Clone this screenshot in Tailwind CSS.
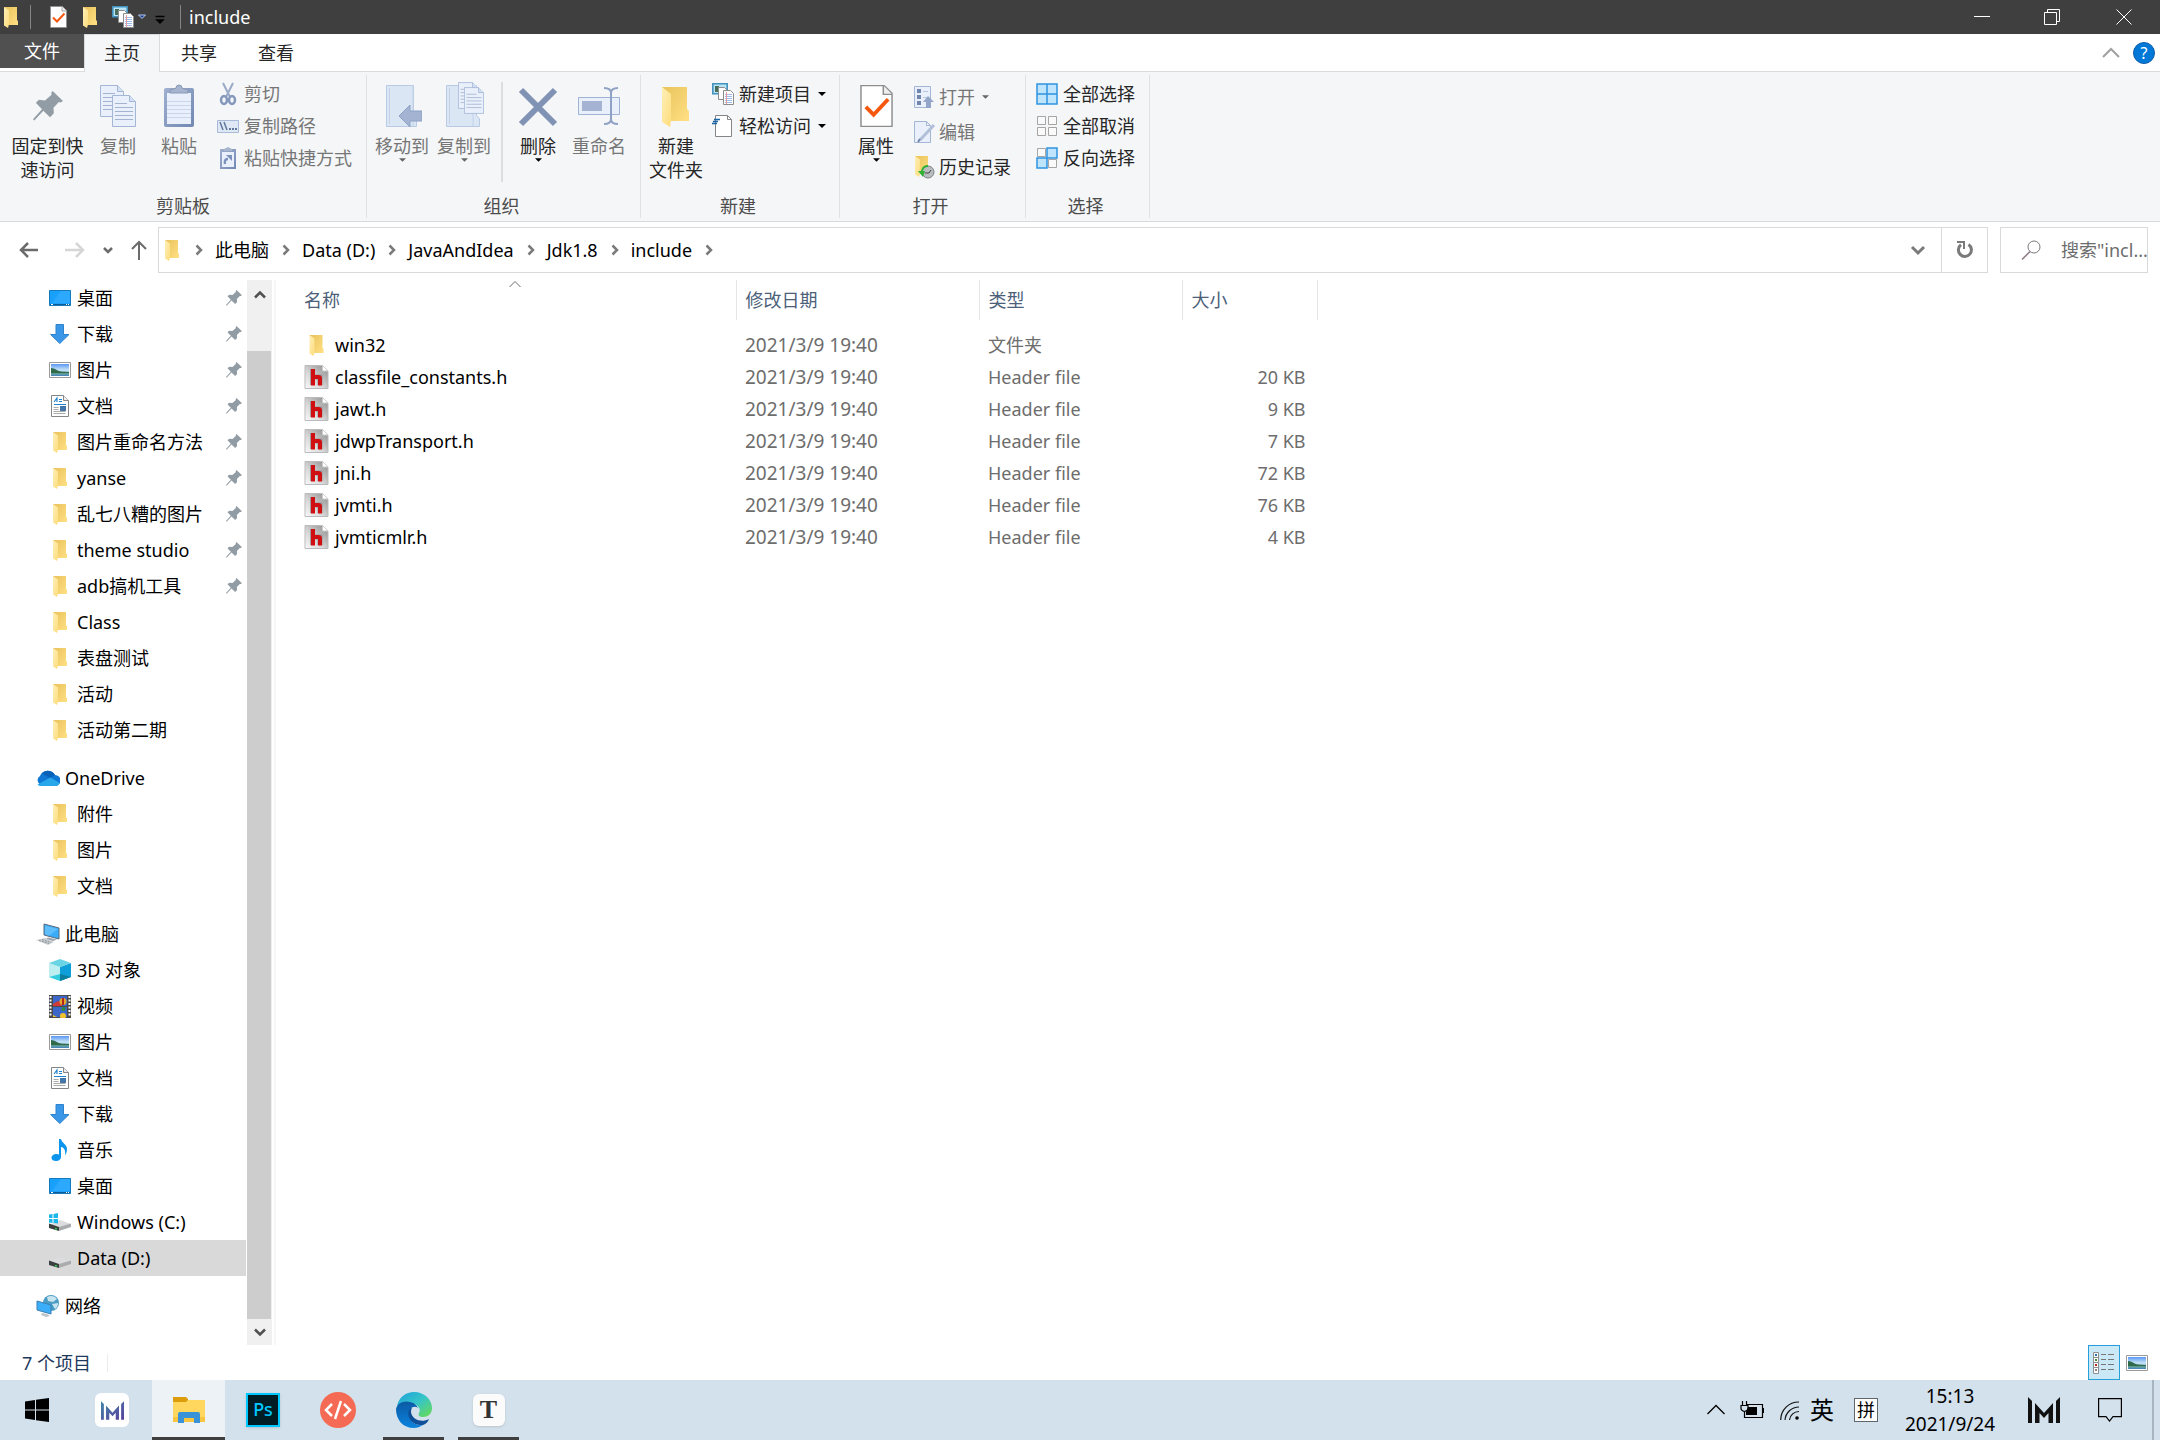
<!DOCTYPE html>
<html lang="zh-CN">
<head>
  <meta charset="UTF-8">
  <meta name="viewport" content="width=device-width, initial-scale=1.0">
  <title>include</title>
  <script src="https://cdn.jsdelivr.net/npm/@tailwindcss/browser@4"></script>
</head>
<body class="flex min-h-screen flex-col bg-white font-['Noto_Sans','Noto_Sans_CJK_SC',sans-serif] text-[18px] leading-6 text-black">

  <!-- Shared icons -->
  <svg class="absolute size-0" aria-hidden="true">
    <defs>
      <linearGradient id="gold" x1="0" y1="0" x2="1" y2="1"><stop offset="0" stop-color="#e9c25b"/><stop offset="1" stop-color="#ffe084"/></linearGradient>
      <linearGradient id="cream" x1="0" y1="0" x2="1" y2="1"><stop offset="0" stop-color="#fff0b8"/><stop offset="1" stop-color="#fddc7c"/></linearGradient>
      <linearGradient id="sky" x1="0" y1="0" x2="0" y2="1"><stop offset="0" stop-color="#5a97f5"/><stop offset=".5" stop-color="#c8e4f5"/><stop offset="1" stop-color="#3f7fb5"/></linearGradient>
      <linearGradient id="grey" x1="1" y1="0" x2="0" y2="1"><stop offset="0" stop-color="#8a8a8a"/><stop offset=".6" stop-color="#d8d8d8"/><stop offset="1" stop-color="#fafafa"/></linearGradient>
      <linearGradient id="clip" x1="0" y1="0" x2="1" y2="1"><stop offset="0" stop-color="#9fb0cf"/><stop offset="1" stop-color="#7288b3"/></linearGradient>
      <linearGradient id="mark" x1="0" y1="0" x2="1" y2="1"><stop offset="0" stop-color="#3d86a8"/><stop offset="1" stop-color="#5a3f9c"/></linearGradient>
      <linearGradient id="edgeTop" x1="0" y1="0" x2="1" y2="1"><stop offset="0" stop-color="#1e9fdc"/><stop offset=".5" stop-color="#36c5c8"/><stop offset="1" stop-color="#6bdc4c"/></linearGradient>
      <linearGradient id="edgeBlue" x1="0" y1="0" x2="0" y2="1"><stop offset="0" stop-color="#0c59a4"/><stop offset="1" stop-color="#0a84df"/></linearGradient>
    </defs>
    <symbol id="folder" viewBox="0 0 14 21"><path d="M0 0h13v13l1 1v4H4z" fill="url(#gold)"/><path d="M0 0l5 3.500v14l-1 3.500-4-2.500z" fill="url(#cream)"/></symbol>
    <symbol id="pin" viewBox="0 0 16 16"><path d="M10.500 0L16 5.300l-1.300.8-.9-.2-2.900 3 .2 3-2 2.100-3.600-3.500L.7 15.700 0 15l4.800-5.300-3.300-3.400 1.700-1.600 3.200.3L9.900 2l-.2-1z" fill="#929ca4"/></symbol>
    <symbol id="desktop" viewBox="0 0 22 16"><path d="M.5.5h21v15H.5z" fill="#18a0fb" stroke="#1579bd"/><path d="M12 1h9v12H3z" fill="#3aaefd" opacity=".6"/><path d="M1 14.500h20" stroke="#0d5b94"/><path d="M2 14.500h2M17 14.500h1M19 14.500h1" stroke="#fff"/></symbol>
    <symbol id="down" viewBox="0 0 20 20"><path d="M6 .5h7.500v10h5.500l-9.200 9-9.200-9H6z" fill="#3a97e8" stroke="#2d83ce"/></symbol>
    <symbol id="picture" viewBox="0 0 22 16"><path d="M.5.5h21v15H.5z" fill="#fff" stroke="#9a9a9a"/><path d="M2 2h18v12H2z" fill="url(#sky)"/><path d="M2 6c4 0 6 3 10 3.500 3 .3 5 .5 8 .5v1H2z" fill="#2f6a4b"/><path d="M2 11h18v1.500H2z" fill="#5c9a8e"/></symbol>
    <symbol id="doc" viewBox="0 0 18 22"><path d="M.5.5h12l5 5v16H.5z" fill="#fff" stroke="#858585"/><path d="M12.500.5v5h5" fill="#eee" stroke="#858585"/><path d="M3 7l3-4v4M8 4.500h3M8 6.500h3M3 9.500h12" stroke="#2084d0" fill="none" stroke-width="1.200"/><path d="M9 11h6v5H9z" fill="#4476aa"/><path d="M2.500 12.500h5M2.500 14.500h5M2.500 16.500h12M2.500 18.500h12" stroke="#aaa"/></symbol>
    <symbol id="cloud" viewBox="0 0 24 16"><path d="M5 15a5 5 0 0 1-1-9 8.300 8.300 0 0 1 15-1 5.400 5.400 0 0 1 0 11H5z" fill="#0f78d4"/><path d="M6 3.500A8 8 0 0 1 19 5l-5 3z" fill="#0a62b8"/><path d="M14.500 7.500l9.300 5.500a5 5 0 0 1-4.800 3H4a5 5 0 0 1-2.500-1.500z" fill="#28a8ea"/></symbol>
    <symbol id="pc" viewBox="0 0 24 22"><path d="M8 1l15 4v11L8 12z" fill="#3badf8" stroke="#57697a"/><path d="M9 2.500L22 6l-9 6.500-4-1z" fill="#74c9fd" opacity=".6"/><path d="M12 14.500l9 2-4 1.500-7-2z" fill="#9aa6ae"/><path d="M0 17l9-2 9 4-6 3z" fill="#c9ced2"/><path d="M3 17.500l10 3M6 16.500l9 3" stroke="#8e969c" stroke-dasharray="2 1"/></symbol>
    <symbol id="cube" viewBox="0 0 22 22"><path d="M0 4l11 4v14L0 18z" fill="#bdeef0"/><path d="M22 4L11 8v14l11-4z" fill="#0e9fd8"/><path d="M11 0l11 4-11 4L0 4z" fill="#69d4e4"/><path d="M11 15l11 3-11 4z" fill="#0c7f9e"/><path d="M11 15v7L0 18z" fill="#34cde0"/></symbol>
    <symbol id="film" viewBox="0 0 22 23"><path d="M0 0h22v23H0z" fill="#4a4a4a"/><path d="M1.500 1v21M20.500 1v21" stroke="#fff" stroke-width="2" stroke-dasharray="2 1.500"/><path d="M4 1h14v10H4zM4 12h14v10H4z" fill="#3a67c8"/><path d="M4 9l5-3 4 2v3H4z" fill="#d33a35"/><circle cx="14" cy="6.500" r="3.500" fill="#e7a92c"/><path d="M13 3h2v7h-2z" fill="#b3261e"/><circle cx="14.500" cy="14" r="2" fill="#2d8a3e"/><circle cx="14" cy="21" r="3" fill="#f0c22d"/><path d="M4 22v-2l4 2z" fill="#f0c22d"/></symbol>
    <symbol id="note" viewBox="0 0 18 22"><path d="M8 0h2c.5 4 6 5 6 10 0 3-1 5-2 6.500 1-5-1-8-4-8.500V18c0 2.500-2.500 4-5 4s-4.500-1-4.500-3.200S3 15 5.500 15c1 0 2 .2 2.500.5z" fill="#0c95ec"/></symbol>
    <symbol id="drive" viewBox="0 0 22 12"><path d="M0 5l11-4 11 4-12 4z" fill="#dcdcde"/><path d="M10 8l12-3.500V8l-12 4z" fill="#a9abad"/><path d="M0 4.500L10 8v4L0 9z" fill="#3b3f3f"/><path d="M6 9.500l2 .6" stroke="#2ed04f" stroke-width="1.500"/></symbol>
    <symbol id="drivewin" viewBox="0 0 22 18"><path d="M0 12l11-5 11 4-12 4z" fill="#dcdcde"/><path d="M10 14l12-3.500V14l-12 4z" fill="#a9abad"/><path d="M0 10.500L10 14v4L0 15z" fill="#3b3f3f"/><path d="M6 15.500l2 .6" stroke="#2ed04f" stroke-width="1.500"/><path d="M0 1.500l3.500-.5v4H0zM4.500 1L9 0v5H4.500zM0 6h3.500v4L0 9.500zM4.500 6H9v4.500L4.500 10z" fill="#1cb8ea"/></symbol>
    <symbol id="globe" viewBox="0 0 22 22"><circle cx="14" cy="8" r="8" fill="#4a9cc4"/><path d="M10 2c4-2 8-1 10 2l-4 3-5-1zM15 9l6-1c0 3-1 5-3 6z" fill="#c9e5ef"/><path d="M0 6l14 4v9L0 15z" fill="#3caef9" stroke="#3a7fb4"/><path d="M5 18l5 1 3 2-4 1-5-2z" fill="#bcc5ca"/></symbol>
    <symbol id="header" viewBox="0 0 24 24"><path d="M.5.5H18l5.500 5.500v17.500H.5z" fill="url(#grey)" stroke="#bbb"/><path d="M18 .5V6h5.500z" fill="#fff" stroke="#ccc"/><path d="M8 4v16M8 12h7.500v8" fill="none" stroke="#7d7d7d" stroke-width="5" opacity=".6"/><path d="M8.500 4v16.500M8.500 12H14c1 0 1.500.5 1.500 1.500v7" fill="none" stroke="#cf0f12" stroke-width="4"/></symbol>
    <symbol id="newitems" viewBox="0 0 22 22"><path d="M.8.8h14.400v10H.8z" fill="#b9e4f7" stroke="#4292bd" stroke-width="1.600"/><path d="M3 3h4v6H3z" fill="#476d5b"/><path d="M6.500 4.500h6l3 3v9h-9z" fill="#fff" stroke="#8c8c8c"/><path d="M11.500 7.500h7l3 3v11h-10z" fill="#fff" stroke="#8c8c8c"/><path d="M13 11.500h7M13 13.500h7M13 15.500h7M13 17.500h7M13 19.500h7" stroke="#9dbde8"/><path d="M14.500 9v12" stroke="#e79a9a"/></symbol>
    <symbol id="check" viewBox="0 0 34 44"><path d="M1 1h24l8 8v34H1z" fill="#fff" stroke="#8d8d8d" stroke-width="1.500"/><path d="M24 1v9h9" fill="#eee" stroke="#8d8d8d" stroke-width="1.500"/><path d="M6 23l8 8 15-16" fill="none" stroke="#f4580e" stroke-width="4"/></symbol>
    <symbol id="crumb" viewBox="0 0 8 12"><path d="M1.500 1.500L6 6l-4.500 4.500" fill="none" stroke="#7a7a7a" stroke-width="2.500"/></symbol>
    <symbol id="tri" viewBox="0 0 8 4"><path d="M0 0h8L4 4z"/></symbol>
    <symbol id="sheet" viewBox="0 0 24 32"><path d="M.5.5h17l6 6v25H.5z" fill="#e9f0fb" stroke="#a3b6d6"/><path d="M17.500.5v6h6" fill="#d5e1f3" stroke="#a3b6d6"/><path d="M3 8.500h12M3 12.500h18M3 16.500h18M3 20.500h18M3 24.500h18" stroke="#a3b4d0"/></symbol>
    <symbol id="mlogo" viewBox="0 0 32 26"><path d="M0 0l4 4v22H0zM28 4l4-4v26h-4zM7 6l9 10 9-10v20h-4.500V16L16 21l-4.500-5v10H7z"/></symbol>
  </svg>

  <!-- Title bar -->
  <header class="flex h-[34px] items-center bg-[#3f3f3f] pl-1 text-white">
    <svg class="h-[21px] w-[14px]"><use href="#folder"/></svg>
    <span class="ml-3 h-6 w-px bg-[#858585]"></span>
    <button class="ml-[19px]" aria-label="属性"><svg class="h-[22px] w-[17px]"><use href="#check"/></svg></button>
    <button class="ml-4" aria-label="新建文件夹"><svg class="h-[21px] w-[14px]"><use href="#folder"/></svg></button>
    <button class="ml-[15px] flex items-center gap-1" aria-label="新建项目">
      <svg class="size-[22px]"><use href="#newitems"/></svg>
      <svg class="size-2" viewBox="0 0 8 8"><path d="M.5 2h7L4 5.500z" fill="#1c3f94" stroke="#b9c9ee"/></svg>
    </button>
    <button class="ml-2" aria-label="自定义快速访问工具栏"><svg class="h-4 w-3" viewBox="0 0 12 16"><path d="M1.500 7.500h9M3 11h6l-3 3z" stroke="#000" stroke-width="1.500"/></svg></button>
    <span class="ml-[14px] h-6 w-px bg-[#858585]"></span>
    <h1 class="ml-2">include</h1>
    <div class="ml-auto flex h-full">
      <button class="flex w-[70px] items-center justify-center" aria-label="最小化"><svg class="size-4" viewBox="0 0 16 16"><path d="M0 7.500h16" stroke="#fff"/></svg></button>
      <button class="flex w-[70px] items-center justify-center" aria-label="还原"><svg class="size-4" viewBox="0 0 16 16"><path d="M.5 3.500h12v12H.5zM3.500 3.500v-3h12v12h-3" fill="none" stroke="#fff"/></svg></button>
      <button class="flex w-[73px] items-center justify-center" aria-label="关闭"><svg class="size-4" viewBox="0 0 16 16"><path d="M.5.5l15 15M15.500.5l-15 15" stroke="#fff"/></svg></button>
    </div>
  </header>

  <!-- Ribbon tabs -->
  <nav class="flex h-[38px] border-b border-[#dadbdc] text-[#262626]">
    <button class="h-[34px] w-[84px] bg-[#505050] text-white">文件</button>
    <button class="-mb-px w-[76px] border border-b-0 border-[#dadbdc] bg-[#f5f6f8] pb-[2px]">主页</button>
    <button class="w-[78px]">共享</button>
    <button class="w-[76px]">查看</button>
    <div class="ml-auto flex items-center gap-3 pr-[5px]">
      <button aria-label="最小化功能区"><svg class="h-4 w-5" viewBox="0 0 20 16"><path d="M2 12l8-8 8 8" fill="none" stroke="#a0a0a0" stroke-width="2"/></svg></button>
      <button class="size-[22px] rounded-full border border-[#0b5cab] bg-[#0078d7] text-[16px] leading-5 text-white" aria-label="帮助">?</button>
    </div>
  </nav>

  <!-- Ribbon -->
  <section class="flex h-[150px] border-b border-[#dadbdc] bg-[#f5f6f8] py-[3px] text-[#262626]">
    <div class="flex w-[367px] flex-col border-r border-[#e0e1e3]">
      <div class="flex flex-1 items-start">
        <button class="flex w-[95px] flex-col items-center pt-[7px]">
          <svg class="mb-1 h-12 w-[30px]"><use href="#pin"/></svg>
          <span>固定到快<br>速访问</span>
        </button>
        <button class="flex w-[46px] flex-col items-center pt-[7px] text-[#767676]">
          <svg class="mb-1 h-12 w-9" viewBox="0 0 36 48"><use href="#sheet" y="3" width="24" height="32"/><use href="#sheet" x="12" y="13" width="24" height="32"/></svg>
          复制
        </button>
        <button class="flex w-[76px] flex-col items-center pt-[7px] text-[#767676]">
          <svg class="mb-1 h-12 w-8" viewBox="0 0 32 48"><rect x="1" y="6" width="30" height="39" rx="2" fill="url(#clip)"/><path d="M4 11h24v31H4z" fill="#e9f0fb"/><path d="M4 19.500h24M4 23.500h24M4 27.500h24M4 31.500h24M4 35.500h24" stroke="#c9d6ec"/><path d="M7 11V8l6-2a3 3 0 0 1 6 0l6 2v3z" fill="#a6b4cd" stroke="#8898b8"/></svg>
          粘贴
        </button>
        <div class="flex flex-col pt-[3px] text-[#767676]">
          <button class="flex h-8 items-center gap-[3px]">
            <svg class="size-6" viewBox="0 0 24 24"><path d="M6 1l7 14M16 1L9 15" stroke="#9aabc7" stroke-width="2"/><ellipse cx="7" cy="18" rx="3" ry="4" fill="none" stroke="#8598bd" stroke-width="2.500"/><ellipse cx="15" cy="18" rx="3" ry="4" fill="none" stroke="#8598bd" stroke-width="2.500"/></svg>
            剪切
          </button>
          <button class="flex h-8 items-center gap-[3px]">
            <svg class="size-6" viewBox="0 0 24 24"><path d="M.5 6.500h21v12H.5z" fill="#dfe8f5" stroke="#a9bad8"/><path d="M3 8l3 8M7 8l3 8" stroke="#62789f" stroke-width="1.500"/><path d="M12 15h2M15 15h2M18 15h2" stroke="#62789f" stroke-width="2"/></svg>
            复制路径
          </button>
          <button class="flex h-8 items-center gap-[3px]">
            <svg class="size-6" viewBox="0 0 24 24"><path d="M3 3h16v20H3z" fill="url(#clip)"/><path d="M5 6h12v15H5z" fill="#e9f0fb"/><path d="M7 5V3l4-2 4 2v2z" fill="#a6b4cd"/><path d="M8 18c-1-4 1-5 3-5" fill="none" stroke="#7d92bb" stroke-width="2.500"/><path d="M9 9h6v6z" fill="#7d92bb"/></svg>
            粘贴快捷方式
          </button>
        </div>
      </div>
      <p class="text-center text-[#4c4c4c]">剪贴板</p>
    </div>

    <div class="flex w-[274px] flex-col border-r border-[#e0e1e3]">
      <div class="flex flex-1 items-start pl-1 text-[#767676]">
        <button class="flex w-[62px] flex-col items-center pt-[7px]">
          <svg class="mb-1 h-12 w-10" viewBox="0 0 40 48"><path d="M4.500 3.500h27v30l3 3v8h-30z" fill="#dbe6f5" stroke="#b9cae4"/><path d="M7.500 6v36M31 3v41" stroke="#c3d2e9"/><path d="M17 34l11-11v6h12v10H28v6z" fill="#a3b3d1" stroke="#8ea1c5"/></svg>
          移动到
          <svg class="h-1 w-[7px]" fill="#666"><use href="#tri"/></svg>
        </button>
        <button class="flex w-[62px] flex-col items-center pt-[7px]">
          <svg class="mb-1 h-12 w-10" viewBox="0 0 40 48"><path d="M2.500 3.500h30v30l3 3v8h-33z" fill="#dbe6f5" stroke="#b9cae4"/><path d="M5.500 6v36M29 32v12" stroke="#c3d2e9"/><use href="#sheet" x="14" y="0" width="20" height="27"/><use href="#sheet" x="20" y="5" width="20" height="27"/></svg>
          复制到
          <svg class="h-1 w-[7px]" fill="#666"><use href="#tri"/></svg>
        </button>
        <span class="mr-1 ml-[6px] mt-[7px] h-[100px] w-[2px] bg-[#dcdddf]"></span>
        <button class="flex w-[62px] flex-col items-center pt-[7px] text-[#262626]">
          <svg class="mb-1 h-12 w-10" viewBox="0 0 40 48"><path d="M3 8l34 34M37 8L3 42" stroke="#8193b4" stroke-width="6"/></svg>
          删除
          <svg class="h-1 w-[7px]"><use href="#tri"/></svg>
        </button>
        <button class="flex w-[60px] flex-col items-center pt-[7px]">
          <svg class="mb-1 h-12 w-[42px]" viewBox="0 0 42 48"><path d="M.5 15.500h41v17H.5z" fill="#e9f0fb" stroke="#9fb3d6"/><path d="M4 19h20v10H4z" fill="#a3b3d1"/><path d="M26 6c4 0 7 1 7 5v26c0 4-3 5-7 5M40 6c-4 0-7 1-7 5v26c0 4 3 5 7 5" fill="none" stroke="#8fa2c6" stroke-width="2"/></svg>
          重命名
        </button>
      </div>
      <p class="pr-1 text-center text-[#4c4c4c]">组织</p>
    </div>

    <div class="flex w-[199px] flex-col border-r border-[#e0e1e3]">
      <div class="flex flex-1 items-start">
        <button class="flex w-[70px] flex-col items-center pt-[7px]">
          <svg class="mb-1 h-12 w-7" viewBox="0 0 28 48"><path d="M0 5h25v22l2 2v10H8z" fill="url(#gold)"/><path d="M0 5l9 7v27l-1 6-8-5z" fill="url(#cream)"/></svg>
          <span>新建<br>文件夹</span>
        </button>
        <div class="flex flex-col pt-[3px]">
          <button class="flex h-8 items-center gap-1">
            <svg class="size-6 p-px"><use href="#newitems"/></svg>
            新建项目
            <svg class="ml-[3px] h-1 w-2"><use href="#tri"/></svg>
          </button>
          <button class="flex h-8 items-center gap-1">
            <svg class="size-6" viewBox="0 0 24 24"><path d="M4.500 1.500h12l4 4v17h-16z" fill="#fff" stroke="#858585"/><path d="M16.500 1.500v4h4" fill="none" stroke="#858585"/><path d="M3 5.500h6M2 7.500h5M1 9.500h5" stroke="#1a66a6" stroke-width="1.500"/></svg>
            轻松访问
            <svg class="ml-[3px] h-1 w-2"><use href="#tri"/></svg>
          </button>
        </div>
      </div>
      <p class="pr-1 text-center text-[#4c4c4c]">新建</p>
    </div>

    <div class="flex w-[186px] flex-col border-r border-[#e0e1e3]">
      <div class="flex flex-1 items-start">
        <button class="flex w-[72px] flex-col items-center pt-[7px]">
          <svg class="mb-1 h-12 w-[33px] py-0.5"><use href="#check"/></svg>
          属性
          <svg class="h-1 w-[7px]"><use href="#tri"/></svg>
        </button>
        <div class="flex flex-col pt-1">
          <button class="flex h-[35px] items-center gap-[3px] text-[#767676]">
            <svg class="size-6" viewBox="0 0 24 24"><path d="M2.500 1.500h16v21h-16z" fill="#e9f0fb" stroke="#a3b6d6"/><path d="M5 4h4v4H5zM5 10h4v4H5zM5 16h4v4H5z" fill="#7186ae"/><path d="M11 6.500h5M11 12.500h5" stroke="#b9c8e0"/><path d="M16 11l6 6h-3v6h-5v-6h-3z" fill="#93a5c8"/></svg>
            打开
            <svg class="ml-1 h-1 w-[7px]" fill="#666"><use href="#tri"/></svg>
          </button>
          <button class="flex h-[35px] items-center gap-[3px] text-[#767676]">
            <svg class="size-6" viewBox="0 0 24 24"><path d="M2.500 1.500h12l4 4v17h-16z" fill="#e9f0fb" stroke="#a3b6d6"/><path d="M14.500 1.500v4h4" fill="none" stroke="#a3b6d6"/><path d="M22 5L8 20" stroke="#b1bfd8" stroke-width="3"/><path d="M8 19l-2 3" stroke="#7186ae" stroke-width="2"/></svg>
            编辑
          </button>
          <button class="flex h-[35px] items-center gap-[3px]">
            <svg class="size-6" viewBox="0 0 24 24"><use href="#folder" x="3" y="1" width="14" height="21"/><circle cx="16" cy="17" r="6" fill="#b9bdbf" stroke="#7c8082"/><path d="M13 18h4l2-3" stroke="#444" fill="none"/><path d="M16 10c-4 0-6 2-7 6H6l5 6 2-6h-2c0-2 2-4 5-4z" fill="#2eb135"/></svg>
            历史记录
          </button>
        </div>
      </div>
      <p class="pr-1 text-center text-[#4c4c4c]">打开</p>
    </div>

    <div class="flex w-[124px] flex-col border-r border-[#e0e1e3]">
      <div class="flex flex-1 flex-col pt-[3px] pl-[9px]">
        <button class="flex h-8 items-center gap-1">
          <svg class="size-6" viewBox="0 0 24 24"><path d="M2 2h20v20H2zM12 2v20M2 12h20" fill="#bfe5fd" stroke="#2f94e0" stroke-width="1.500"/></svg>
          全部选择
        </button>
        <button class="flex h-8 items-center gap-1">
          <svg class="size-6" viewBox="0 0 24 24"><path d="M2.500 2.500h8v8h-8zM13.500 2.500h8v8h-8zM2.500 13.500h8v8h-8zM13.500 13.500h8v8h-8z" fill="#fafafa" stroke="#a5a5a5"/></svg>
          全部取消
        </button>
        <button class="flex h-8 items-center gap-1">
          <svg class="size-6" viewBox="0 0 24 24"><path d="M2.500 2.500h8v8h-8zM13.500 13.500h8v8h-8z" fill="#fafafa" stroke="#a5a5a5"/><path d="M12 2h10v10H12zM2 12h10v10H2z" fill="#bfe5fd" stroke="#2f94e0" stroke-width="1.500"/></svg>
          反向选择
        </button>
      </div>
      <p class="pr-1 text-center text-[#4c4c4c]">选择</p>
    </div>
  </section>

  <!-- Address bar -->
  <div class="flex h-[58px] items-center pr-3 pb-[2px] pl-[18px]">
    <button aria-label="后退"><svg class="size-[22px]" viewBox="0 0 22 22"><path d="M20 11H3M10 4l-7 7 7 7" fill="none" stroke="#6b6b6b" stroke-width="2.500"/></svg></button>
    <button class="ml-6" aria-label="前进"><svg class="size-[22px]" viewBox="0 0 22 22"><path d="M1 11h18M12 4l7 7-7 7" fill="none" stroke="#d6d6d6" stroke-width="2.500"/></svg></button>
    <button class="ml-4" aria-label="最近浏览的位置"><svg class="h-3 w-[12px]" viewBox="0 0 12 12"><path d="M2 4l4 4 4-4" fill="none" stroke="#6b6b6b" stroke-width="2.500"/></svg></button>
    <button class="ml-4" aria-label="上移"><svg class="h-[22px] w-[18px]" viewBox="0 0 18 22"><path d="M9 21V3M2 10l7-7 7 7" fill="none" stroke="#6b6b6b" stroke-width="2"/></svg></button>
    <div class="ml-[10px] flex h-[46px] flex-1 items-center border border-[#d9d9d9] pl-[6px]">
      <svg class="mr-4 h-[21px] w-[14px]"><use href="#folder"/></svg>
      <ol class="flex items-center gap-[13px]">
        <li class="flex items-center gap-3"><svg class="h-3 w-2"><use href="#crumb"/></svg><a href="#">此电脑</a></li>
        <li class="flex items-center gap-3"><svg class="h-3 w-2"><use href="#crumb"/></svg><a href="#">Data (D:)</a></li>
        <li class="flex items-center gap-3"><svg class="h-3 w-2"><use href="#crumb"/></svg><a href="#">JavaAndIdea</a></li>
        <li class="flex items-center gap-3"><svg class="h-3 w-2"><use href="#crumb"/></svg><a href="#">Jdk1.8</a></li>
        <li class="flex items-center gap-3"><svg class="h-3 w-2"><use href="#crumb"/></svg><a href="#">include</a></li>
        <li><svg class="h-3 w-2"><use href="#crumb"/></svg></li>
      </ol>
      <button class="ml-auto flex h-full w-[46px] items-center justify-center" aria-label="上一个位置"><svg class="h-3 w-4" viewBox="0 0 16 12"><path d="M2 3l6 6 6-6" fill="none" stroke="#7a7a7a" stroke-width="3"/></svg></button>
      <button class="flex h-full w-[46px] items-center justify-center border-l border-[#d9d9d9]" aria-label="刷新"><svg class="size-[18px]" viewBox="0 0 18 18"><path d="M12.500 3.500A6.500 6.500 0 1 1 5 3.700" fill="none" stroke="#7a7a7a" stroke-width="3"/><path d="M1 1h7v7" fill="none" stroke="#7a7a7a" stroke-width="2"/></svg></button>
    </div>
    <div class="ml-3 flex h-[46px] w-[148px] items-center border border-[#d9d9d9] pl-5">
      <svg class="size-5 shrink-0" viewBox="0 0 20 20"><circle cx="13" cy="7" r="6" fill="none" stroke="#7a7a7a"/><path d="M9 11.500l-8 8" stroke="#8c7a86" stroke-width="1.500"/></svg>
      <input type="text" class="ml-5 w-full min-w-0 placeholder:text-[#6d6d6d]" placeholder="搜索&quot;incl..." aria-label="搜索">
    </div>
  </div>

  <main class="flex flex-1">
    <!-- Navigation pane -->
    <aside class="w-[247px]">
      <ul>
        <li><a href="#" class="flex h-9 items-center pr-[5px] pl-[49px]"><svg class="mr-[6px] h-4 w-[22px]"><use href="#desktop"/></svg>桌面<svg class="ml-auto size-4"><use href="#pin"/></svg></a></li>
        <li><a href="#" class="flex h-9 items-center pr-[5px] pl-[49px]"><svg class="mr-[6px] h-5 w-[22px]"><use href="#down"/></svg>下载<svg class="ml-auto size-4"><use href="#pin"/></svg></a></li>
        <li><a href="#" class="flex h-9 items-center pr-[5px] pl-[49px]"><svg class="mr-[6px] h-4 w-[22px]"><use href="#picture"/></svg>图片<svg class="ml-auto size-4"><use href="#pin"/></svg></a></li>
        <li><a href="#" class="flex h-9 items-center pr-[5px] pl-[49px]"><svg class="mr-[6px] h-[22px] w-[22px]"><use href="#doc"/></svg>文档<svg class="ml-auto size-4"><use href="#pin"/></svg></a></li>
        <li><a href="#" class="flex h-9 items-center pr-[5px] pl-[49px]"><svg class="mr-[6px] h-[21px] w-[22px]"><use href="#folder"/></svg>图片重命名方法<svg class="ml-auto size-4"><use href="#pin"/></svg></a></li>
        <li><a href="#" class="flex h-9 items-center pr-[5px] pl-[49px]"><svg class="mr-[6px] h-[21px] w-[22px]"><use href="#folder"/></svg>yanse<svg class="ml-auto size-4"><use href="#pin"/></svg></a></li>
        <li><a href="#" class="flex h-9 items-center pr-[5px] pl-[49px]"><svg class="mr-[6px] h-[21px] w-[22px]"><use href="#folder"/></svg>乱七八糟的图片<svg class="ml-auto size-4"><use href="#pin"/></svg></a></li>
        <li><a href="#" class="flex h-9 items-center pr-[5px] pl-[49px]"><svg class="mr-[6px] h-[21px] w-[22px]"><use href="#folder"/></svg>theme studio<svg class="ml-auto size-4"><use href="#pin"/></svg></a></li>
        <li><a href="#" class="flex h-9 items-center pr-[5px] pl-[49px]"><svg class="mr-[6px] h-[21px] w-[22px]"><use href="#folder"/></svg>adb搞机工具<svg class="ml-auto size-4"><use href="#pin"/></svg></a></li>
        <li><a href="#" class="flex h-9 items-center pl-[49px]"><svg class="mr-[6px] h-[21px] w-[22px]"><use href="#folder"/></svg>Class</a></li>
        <li><a href="#" class="flex h-9 items-center pl-[49px]"><svg class="mr-[6px] h-[21px] w-[22px]"><use href="#folder"/></svg>表盘测试</a></li>
        <li><a href="#" class="flex h-9 items-center pl-[49px]"><svg class="mr-[6px] h-[21px] w-[22px]"><use href="#folder"/></svg>活动</a></li>
        <li><a href="#" class="flex h-9 items-center pl-[49px]"><svg class="mr-[6px] h-[21px] w-[22px]"><use href="#folder"/></svg>活动第二期</a></li>
      </ul>
      <a href="#" class="mt-3 flex h-9 items-center pl-9"><svg class="mr-[5px] h-4 w-6"><use href="#cloud"/></svg>OneDrive</a>
      <ul>
        <li><a href="#" class="flex h-9 items-center pl-[49px]"><svg class="mr-[6px] h-[21px] w-[22px]"><use href="#folder"/></svg>附件</a></li>
        <li><a href="#" class="flex h-9 items-center pl-[49px]"><svg class="mr-[6px] h-[21px] w-[22px]"><use href="#folder"/></svg>图片</a></li>
        <li><a href="#" class="flex h-9 items-center pl-[49px]"><svg class="mr-[6px] h-[21px] w-[22px]"><use href="#folder"/></svg>文档</a></li>
      </ul>
      <a href="#" class="mt-3 flex h-9 items-center pl-9"><svg class="mr-[5px] h-[22px] w-6"><use href="#pc"/></svg>此电脑</a>
      <ul>
        <li><a href="#" class="flex h-9 items-center pl-[49px]"><svg class="mr-[6px] h-[22px] w-[22px]"><use href="#cube"/></svg>3D 对象</a></li>
        <li><a href="#" class="flex h-9 items-center pl-[49px]"><svg class="mr-[6px] h-[23px] w-[22px]"><use href="#film"/></svg>视频</a></li>
        <li><a href="#" class="flex h-9 items-center pl-[49px]"><svg class="mr-[6px] h-4 w-[22px]"><use href="#picture"/></svg>图片</a></li>
        <li><a href="#" class="flex h-9 items-center pl-[49px]"><svg class="mr-[6px] h-[22px] w-[22px]"><use href="#doc"/></svg>文档</a></li>
        <li><a href="#" class="flex h-9 items-center pl-[49px]"><svg class="mr-[6px] h-5 w-[22px]"><use href="#down"/></svg>下载</a></li>
        <li><a href="#" class="flex h-9 items-center pl-[49px]"><svg class="mr-[6px] h-[22px] w-[22px]"><use href="#note"/></svg>音乐</a></li>
        <li><a href="#" class="flex h-9 items-center pl-[49px]"><svg class="mr-[6px] h-4 w-[22px]"><use href="#desktop"/></svg>桌面</a></li>
        <li><a href="#" class="flex h-9 items-center pl-[49px]"><svg class="mr-[6px] h-[18px] w-[22px]"><use href="#drivewin"/></svg>Windows (C:)</a></li>
        <li><a href="#" class="mr-px flex h-9 items-center bg-[#d9d9d9] pl-[49px]"><svg class="mt-2 mr-[6px] h-3 w-[22px]"><use href="#drive"/></svg>Data (D:)</a></li>
      </ul>
      <a href="#" class="mt-3 flex h-9 items-center pl-9"><svg class="mr-[5px] h-[22px] w-6"><use href="#globe"/></svg>网络</a>
    </aside>

    <!-- Scrollbar -->
    <div class="flex w-[25px] flex-col bg-[#f0f0f0]">
      <button class="flex h-[71px] justify-center pt-[7px]" aria-label="向上滚动"><svg class="h-4 w-3" viewBox="0 0 12 16"><path d="M1 10.500l5-5 5 5" fill="none" stroke="#505050" stroke-width="2.500"/></svg></button>
      <div class="mr-px flex-1 bg-[#cdcdcd]"></div>
      <button class="flex h-[26px] items-center justify-center" aria-label="向下滚动"><svg class="h-4 w-3" viewBox="0 0 12 16"><path d="M1 5.500l5 5 5-5" fill="none" stroke="#505050" stroke-width="2.500"/></svg></button>
    </div>
    <div class="ml-[2px] w-[2px] bg-[#f7f7f7]"></div>

    <!-- File list -->
    <div class="flex-1">
      <table class="w-[1042px] table-fixed text-left text-[#6d6d6d]">
        <thead class="text-[#4c607a]">
          <tr class="h-10">
            <th class="relative w-[460px] border-r border-[#e5e5e5] pl-7 font-normal">名称
              <svg class="absolute top-0 left-[233px] h-2 w-3" viewBox="0 0 12 8"><path d="M.5 7L6 1.500 11.500 7" fill="none" stroke="#6d6d6d"/></svg>
            </th>
            <th class="w-[243px] border-r border-[#e5e5e5] pl-[9px] font-normal">修改日期</th>
            <th class="w-[203px] border-r border-[#e5e5e5] pl-[9px] font-normal">类型</th>
            <th class="border-r border-[#e5e5e5] pl-[9px] font-normal">大小</th>
          </tr>
        </thead>
        <tbody class="before:block before:h-[9px]">
          <tr class="h-8">
            <td class="pl-7 text-black"><a href="#" class="flex items-center gap-[6px]"><svg class="h-[21px] w-[25px]"><use href="#folder"/></svg>win32</a></td>
            <td class="pl-[9px] text-[19px]">2021/3/9 19:40</td>
            <td class="pl-[9px]">文件夹</td>
            <td></td>
          </tr>
          <tr class="h-8">
            <td class="pl-7 text-black"><a href="#" class="flex items-center gap-[6px]"><svg class="h-6 w-[25px]"><use href="#header"/></svg>classfile_constants.h</a></td>
            <td class="pl-[9px] text-[19px]">2021/3/9 19:40</td>
            <td class="pl-[9px]">Header file</td>
            <td class="pr-3 text-right">20 KB</td>
          </tr>
          <tr class="h-8">
            <td class="pl-7 text-black"><a href="#" class="flex items-center gap-[6px]"><svg class="h-6 w-[25px]"><use href="#header"/></svg>jawt.h</a></td>
            <td class="pl-[9px] text-[19px]">2021/3/9 19:40</td>
            <td class="pl-[9px]">Header file</td>
            <td class="pr-3 text-right">9 KB</td>
          </tr>
          <tr class="h-8">
            <td class="pl-7 text-black"><a href="#" class="flex items-center gap-[6px]"><svg class="h-6 w-[25px]"><use href="#header"/></svg>jdwpTransport.h</a></td>
            <td class="pl-[9px] text-[19px]">2021/3/9 19:40</td>
            <td class="pl-[9px]">Header file</td>
            <td class="pr-3 text-right">7 KB</td>
          </tr>
          <tr class="h-8">
            <td class="pl-7 text-black"><a href="#" class="flex items-center gap-[6px]"><svg class="h-6 w-[25px]"><use href="#header"/></svg>jni.h</a></td>
            <td class="pl-[9px] text-[19px]">2021/3/9 19:40</td>
            <td class="pl-[9px]">Header file</td>
            <td class="pr-3 text-right">72 KB</td>
          </tr>
          <tr class="h-8">
            <td class="pl-7 text-black"><a href="#" class="flex items-center gap-[6px]"><svg class="h-6 w-[25px]"><use href="#header"/></svg>jvmti.h</a></td>
            <td class="pl-[9px] text-[19px]">2021/3/9 19:40</td>
            <td class="pl-[9px]">Header file</td>
            <td class="pr-3 text-right">76 KB</td>
          </tr>
          <tr class="h-8">
            <td class="pl-7 text-black"><a href="#" class="flex items-center gap-[6px]"><svg class="h-6 w-[25px]"><use href="#header"/></svg>jvmticmlr.h</a></td>
            <td class="pl-[9px] text-[19px]">2021/3/9 19:40</td>
            <td class="pl-[9px]">Header file</td>
            <td class="pr-3 text-right">4 KB</td>
          </tr>
        </tbody>
      </table>
    </div>
  </main>

  <!-- Status bar -->
  <div class="flex h-[35px] items-center pr-3 pl-[22px] text-[#1e395b]">
    <span>7 个项目</span>
    <span class="ml-4 h-[18px] w-px bg-[#ececec]"></span>
    <button class="ml-auto flex h-[35px] w-8 items-center justify-center border border-[#26a0da] bg-[#cbe8f6]" aria-label="详细信息">
      <svg class="h-[22px] w-[22px]" viewBox="0 0 22 22"><path d="M.5.5h5v21h-5zM.5 5.500h5M.5 10.500h5M.5 15.500h5" fill="#fff" stroke="#8f8f8f"/><path d="M2 3h2" stroke="#2a72b8" stroke-width="2"/><path d="M2 8h2" stroke="#4d8a3a" stroke-width="2"/><path d="M2 13h2" stroke="#b22a22" stroke-width="2"/><path d="M2 18h2" stroke="#888" stroke-width="2"/><path d="M8 2.500h5M15 2.500h6M8 7.500h5M15 7.500h6M8 12.500h5M15 12.500h6M8 17.500h5M15 17.500h6" stroke="#777"/></svg>
    </button>
    <button class="ml-[6px]" aria-label="大缩略图"><svg class="h-4 w-[22px]"><use href="#picture"/></svg></button>
  </div>

  <!-- Taskbar -->
  <footer class="flex h-[60px] bg-[#d3e1ec]">
    <button class="flex w-[73px] items-center justify-center" aria-label="开始"><svg class="size-6" viewBox="0 0 24 24"><path d="M0 3.500l10-1.500v9.500H0zM11 1.800L24 0v11.500H11zM0 12.500h10V22L0 20.500zM11 12.500h13V24l-13-1.800z"/></svg></button>
    <button class="flex w-[78px] items-center justify-center" aria-label="电脑管家"><span class="flex size-[34px] items-center justify-center rounded-md bg-white"><svg class="h-[19px] w-[23px]" fill="url(#mark)"><use href="#mlogo"/></svg></span></button>
    <button class="mx-px flex w-[73px] items-center justify-center border-b-[3px] border-[#3f3f3f] bg-[#edf2f7] pt-[3px]" aria-label="文件资源管理器"><svg class="h-[26px] w-8" viewBox="0 0 32 26"><path d="M0 0h13l2 2v3H0z" fill="#dd9c0b"/><path d="M0 5h13l2-2h17v22H0z" fill="#ffd75e"/><path d="M0 20h32v5H0z" fill="#f8c63e"/><path d="M5 26V17q0-2 2-2h18q2 0 2 2v9h-6v-5H11v5z" fill="#3a93d9"/></svg></button>
    <button class="flex w-[74px] items-center justify-center" aria-label="Photoshop"><span class="size-[34px] border-2 border-[#00c8ff] bg-[#001d26] text-[18px] leading-7 font-medium text-[#00c8ff] shadow">Ps</span></button>
    <button class="flex w-[76px] items-center justify-center" aria-label="代码编辑器"><svg class="size-9" viewBox="0 0 36 36"><circle cx="18" cy="18" r="18" fill="#f46a54"/><path d="M12 12l-6 6 6 6M24 12l6 6-6 6M21 9l-6 18" fill="none" stroke="#fff" stroke-width="2.500"/></svg></button>
    <button class="mx-[7px] flex w-[61px] items-center justify-center border-b-[3px] border-[#3f3f3f] pt-[3px]" aria-label="Edge"><svg class="size-9" viewBox="0 0 36 36"><path d="M1 14C3 5 10 0 18 0c11 0 18 8 18 16 0 6-4 9-9 9-4 0-5-2-4-4 2-3 0-8-6-9S5 11 1 14z" fill="url(#edgeTop)"/><path d="M0 17C1 11 8 8 14 10c5 1 7 4 8 6-4-3-9 0-9 6 0 7 6 12 14 11-3 2-6 3-9 3C7 36 0 28 0 17z" fill="url(#edgeBlue)"/><path d="M13 18c-3 9 5 16 14 15 3-1 5-3 6-6-7 4-17 1-18-7 0-1 0-2 1-4-2 0-2 1-3 2z" fill="#0f4f98"/></svg></button>
    <button class="mx-[7px] flex w-[61px] items-center justify-center border-b-[3px] border-[#3f3f3f] pt-[3px]" aria-label="Typora"><span class="size-8 rounded-md bg-[#fbfbfb] font-['Liberation_Serif',serif] text-[26px] leading-8 font-bold text-[#333] shadow">T</span></button>

    <div class="ml-auto flex items-center">
      <button aria-label="显示隐藏的图标"><svg class="h-3 w-[18px]" viewBox="0 0 18 12"><path d="M.5 10L9 1.500 17.500 10" fill="none" stroke="#000" stroke-width="1.300"/></svg></button>
      <button class="ml-[15px]" aria-label="电源"><svg class="h-[18px] w-6" viewBox="0 0 24 18"><path d="M6 3.500h16.500v13h-18v-4M23.500 7v5M2.500 0v4M6.500 0v4M1 4.500h7v3q0 2-3.500 3-3.500-1-3.500-3zM4.500 10v6" fill="none" stroke="#000" stroke-width="1.200"/><path d="M8 6h9v8H6v-3z"/></svg></button>
      <button class="ml-4" aria-label="网络"><svg class="size-[19px]" viewBox="0 0 19 19"><path d="M.7 19A18 18 0 0 1 19 1M5 19A14 14 0 0 1 19 6M9.500 19A9.500 9.500 0 0 1 19 10.500" fill="none" stroke="#111" stroke-width="1.200"/><circle cx="17" cy="17" r="1.800"/></svg></button>
      <button class="ml-[11px] text-[24px]" aria-label="输入语言">英</button>
      <button class="ml-5 size-6 border border-[#5f666b] bg-white text-[18px] leading-5" aria-label="拼音输入法"><span class="flex justify-center">拼</span></button>
      <button class="w-[144px] text-center text-[19px] leading-7"><span class="block">15:13</span><span class="block">2021/9/24</span></button>
      <button class="ml-[6px]" aria-label="管家"><svg class="h-[26px] w-8" fill="#111"><use href="#mlogo"/></svg></button>
      <button class="mr-[30px] ml-[38px]" aria-label="通知"><svg class="size-6" viewBox="0 0 24 24"><path d="M.6.6h22.800v18H15L11.500 23 8 18.600H.6z" fill="none" stroke="#000" stroke-width="1.200"/></svg></button>
      <button class="h-[60px] w-2 border-l-2 border-[#a9b5be]" aria-label="显示桌面"></button>
    </div>
  </footer>

</body>
</html>
